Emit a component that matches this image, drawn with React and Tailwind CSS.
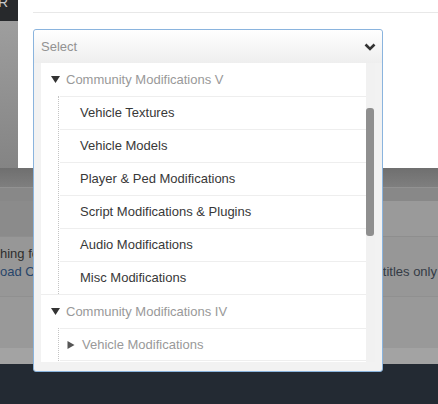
import React from 'react';

const groups = [
  {
    name: 'Community Modifications V',
    items: [
      { name: 'Vehicle Textures' },
      { name: 'Vehicle Models' },
      { name: 'Player & Ped Modifications' },
      { name: 'Script Modifications & Plugins' },
      { name: 'Audio Modifications' },
      { name: 'Misc Modifications' },
    ],
  },
  {
    name: 'Community Modifications IV',
    items: [{ name: 'Vehicle Modifications', collapsed: true }],
  },
];

const TriDown = () => (
  <svg width="9" height="7" viewBox="0 0 9 7" className="shrink-0">
    <path d="M0 0H9L4.5 7Z" fill="#333" />
  </svg>
);

const TriRight = () => (
  <svg width="8" height="8" viewBox="0 0 8 8" className="shrink-0">
    <path d="M0.5 0L7.5 4L0.5 8Z" fill="#555" />
  </svg>
);

const Chevron = () => (
  <svg width="12" height="8" viewBox="0 0 12 8">
    <polyline points="1.5,1.5 6,6 10.5,1.5" fill="none" stroke="#333" strokeWidth="2.6" />
  </svg>
);

const SelectBox = () => (
  <div className="absolute left-0 top-0 z-10 flex h-[343px] w-[350px] flex-col rounded-[3px] border border-[#8ab4de] bg-[#f2f2f2]">
    {/* header */}
    <div className="flex h-[33px] shrink-0 items-center justify-between rounded-t-[3px] bg-gradient-to-b from-white to-[#eeeeee] pl-[7px] pr-[6px]">
      <span className="text-[13px] text-[#929292]">Select</span>
      <Chevron />
    </div>

    {/* dropdown list */}
    <div className="flex min-h-0 flex-1 px-[7px] pb-[9px]">
      <div className="flex-1 overflow-hidden bg-white">
        {groups.map((g, gi) => (
          <div key={g.name} className={gi > 0 ? 'border-t border-[#eeeeee]' : ''}>
            <div className="flex h-[33px] items-center gap-[6px] pl-[10px] text-[13px] text-[#999]">
              <TriDown />
              <span>{g.name}</span>
            </div>
            <div className="ml-[17px] border-l border-dotted border-[#c4c4c4] pl-[1px]">
              {g.items.map((it) =>
                it.collapsed ? (
                  <div key={it.name} className="flex h-[33px] items-center gap-[7px] border-y border-[#eeeeee] pl-[7px] text-[13px] text-[#999]">
                    <TriRight />
                    <span>{it.name}</span>
                  </div>
                ) : (
                  <div key={it.name} className="flex h-[33px] items-center border-t border-[#eeeeee] pl-[20px] text-[13px] text-[#383838]">
                    {it.name}
                  </div>
                )
              )}
            </div>
          </div>
        ))}
      </div>
      {/* scrollbar */}
      <div className="w-[9px] bg-[#f1f1f1]">
        <div className="mt-[45px] h-[128px] w-[8px] rounded-[3px] bg-[#8f8f8f]" />
      </div>
    </div>
  </div>
);

export default function App() {
  return (
    <div className="relative h-[404px] w-[438px] overflow-hidden bg-[#999] font-['Liberation_Sans',Arial,sans-serif]">
      {/* top: dimmed page + modal */}
      <div className="flex h-[168px]">
        <div className="flex w-[18px] flex-col">
          <div className="h-[21px] overflow-hidden bg-[#27292c] text-[14px] leading-none text-[#c8c8c8]">
            <span className="-ml-[2px] -mt-[5px] block">R</span>
          </div>
          <div className="flex-1 bg-gradient-to-b from-[#9e9e9e] to-[#848484]" />
        </div>
        <div className="flex-1 bg-white pl-[15px]">
          <div className="h-[13px] border-b border-[#e8e8e8]" />
          <div className="relative mt-[16px]">
            <SelectBox />
          </div>
        </div>
      </div>

      {/* dimmed page bands */}
      <div className="h-[19px] bg-gradient-to-b from-[#6f6f6f] to-[#7f7f7f]" />
      <div className="h-[14px] border-t border-[#929292] bg-[#888]" />
      <div className="flex h-[35px]">
        <div className="w-[200px] bg-[#8b8b8b]" />
        <div className="flex-1 bg-[#9a9a9a]" />
      </div>
      <div className="h-[60px] border-t border-[#8e8e8e] bg-[#979797] pt-[8px] text-[13px] leading-[18px]">
        <div className="whitespace-nowrap text-[#2e2e2e]">hing for</div>
        <div className="flex justify-between whitespace-nowrap pr-[1px]">
          <span className="text-[#27456a]">oad Ol</span>
          <span className="text-[#343b45]">titles only</span>
        </div>
      </div>
      <div className="h-[52px] border-t border-[#909090] bg-[#999]" />
      <div className="h-[16px] bg-[#a3a3a3]" />
      <div className="h-[40px] bg-[#232a33]" />
    </div>
  );
}
